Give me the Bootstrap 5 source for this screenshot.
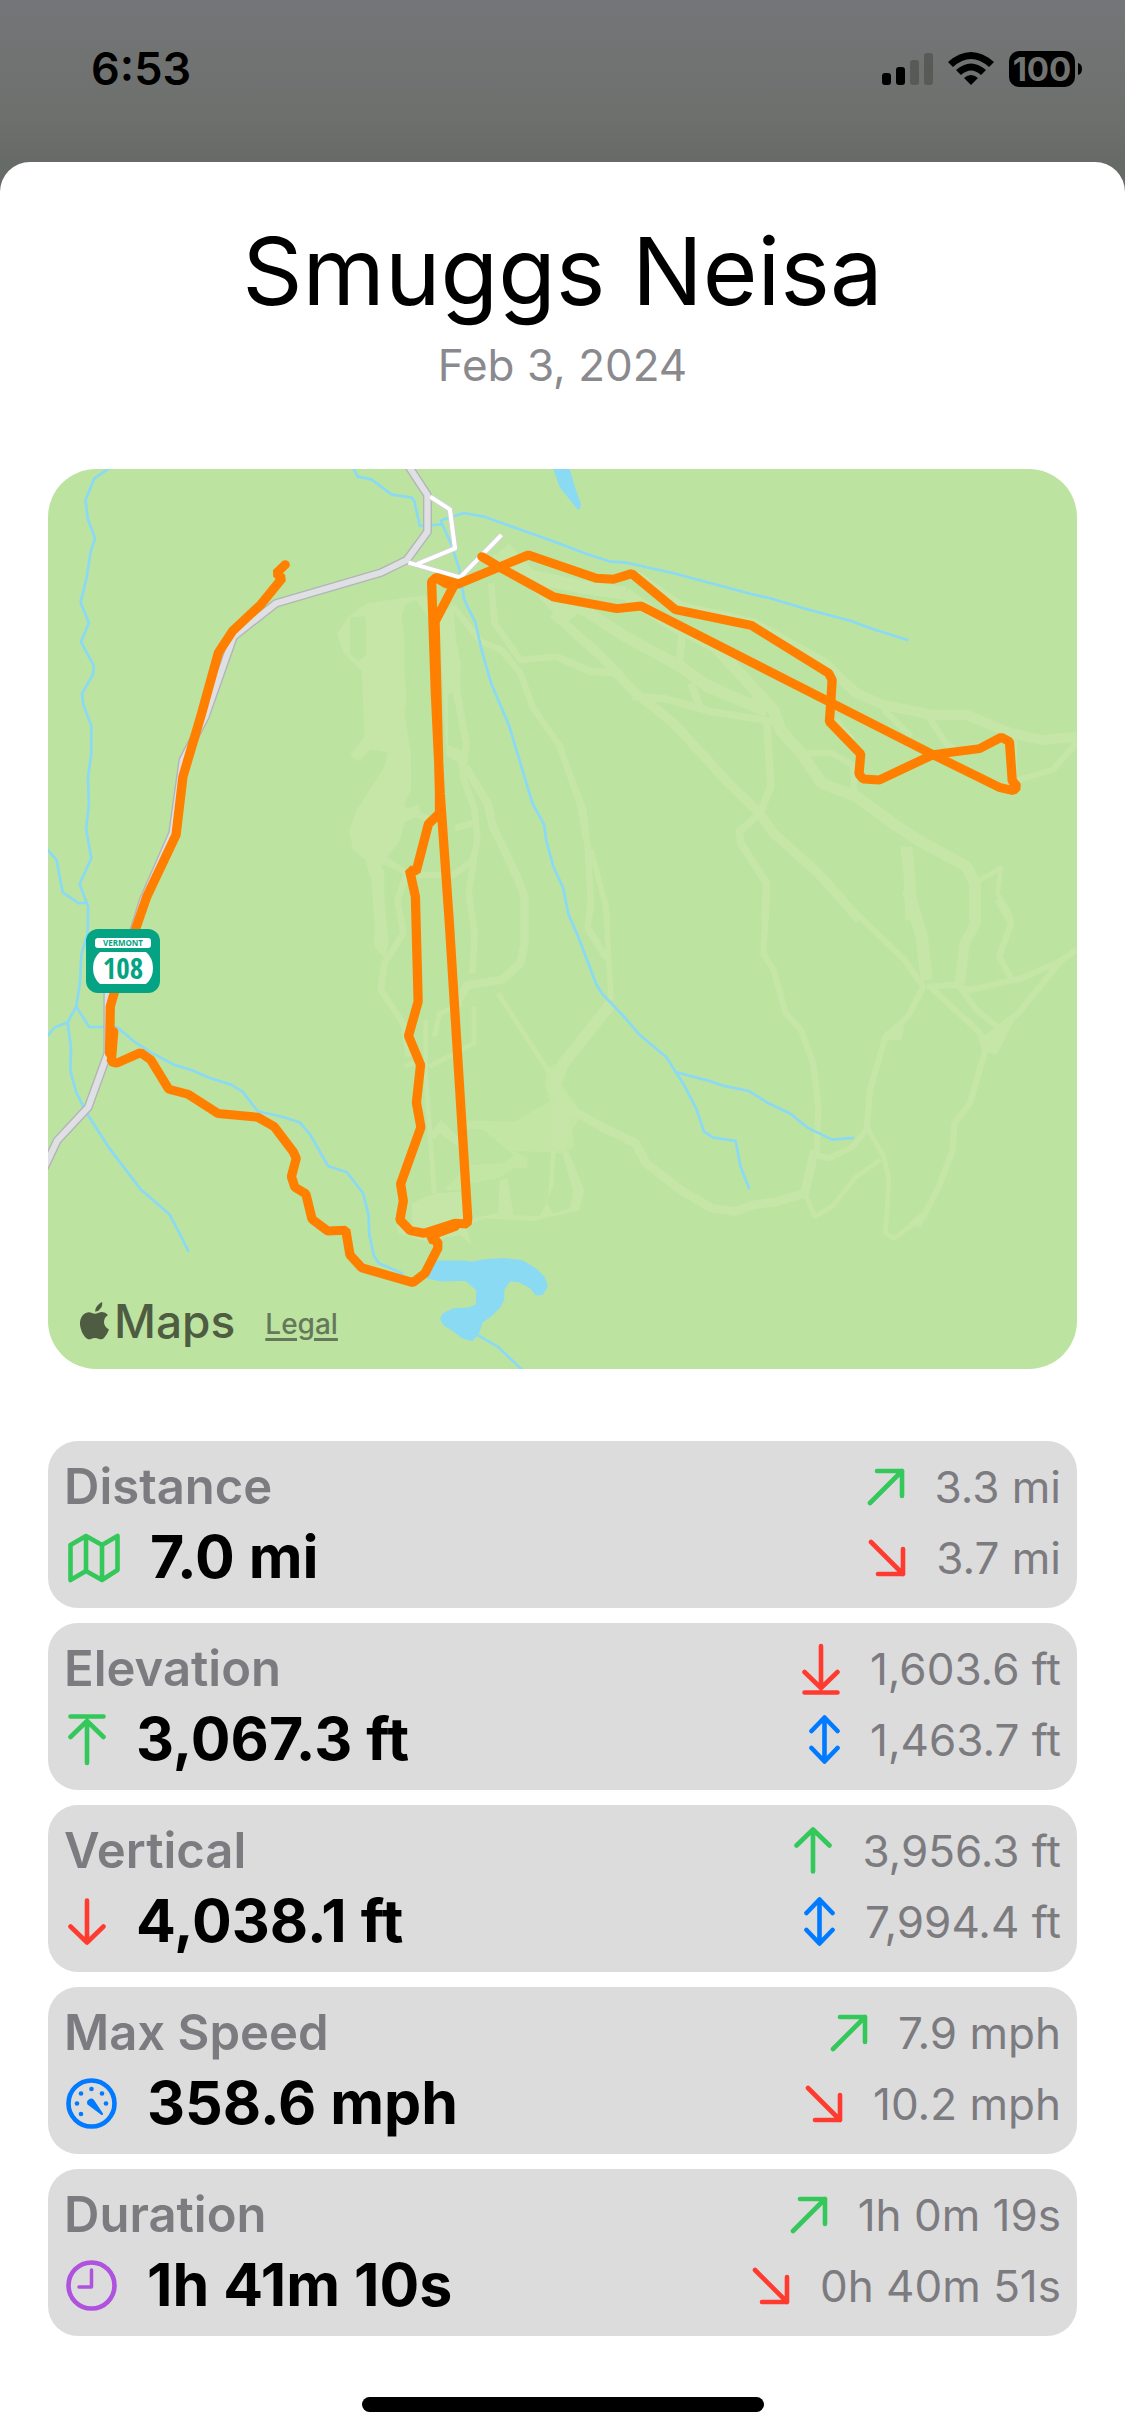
<!DOCTYPE html>
<html lang="en">
<head>
<meta charset="utf-8">
<meta name="viewport" content="width=device-width, initial-scale=1">
<title>Smuggs Neisa</title>
<link href="https://cdn.jsdelivr.net/npm/bootstrap@5.3.0/dist/css/bootstrap.min.css" rel="stylesheet">
<style>
  body { font-family: Inter, "Liberation Sans", sans-serif; color: #000; background: linear-gradient(#747578, #6f716f 100px, #676b67 162px, #676b67 220px, #fff 220px); }
  .status-bar { height: 162px; padding: 0 43px 24px 91px; }
  .clock-time { font-size: 45px; line-height: 54px; font-weight: 600; }
  .sheet { background: #fff; border-radius: 30px 30px 0 0; padding: 57px 48px 24px; }
  .trip-title { font-size: 94px; line-height: 104px; font-weight: 400; }
  .trip-date { font-size: 44px; line-height: 54px; margin-top: 15px; color: #8a8a8e; }
  .trip-map { margin-top: 77px; border-radius: 48px; background: #bde3a1; }
  .map-brand { left: 32px; bottom: 24px; gap: 30px; color: #4e5c42; }
  .maps-word { font-size: 46px; line-height: 48px; font-weight: 500; }
  .legal-link { font-size: 28px; line-height: 36px; font-weight: 500; color: #66785a; text-decoration: underline; text-decoration-thickness: 3px; text-underline-offset: 4px; margin-top: 6px; }
  .stats { margin-top: 72px; gap: 15px; }
  .stat-tile { background: #dcdcdd; border-radius: 30px; padding: 10px 16px 15px; }
  .stat-line { height: 71px; gap: 30px; }
  .stat-name { font-size: 49px; font-weight: 600; color: #7c7b80; }
  .stat-value { font-size: 59px; font-weight: 700; }
  .stat-side { font-size: 44px; color: #7c7b80; }
  .ico { fill: none; stroke: currentColor; stroke-width: 4.6; stroke-linecap: round; stroke-linejoin: round; flex: none; }
  .lead-ico { margin-left: 4px; }
  .round-ico { margin-left: 2px; }
  .c-green { color: #34c759; } .c-red { color: #ff3b30; } .c-blue { color: #007aff; } .c-purple { color: #af52de; }
  .home-bar { width: 402px; height: 15px; border-radius: 8px; background: #000; margin: 61px auto 0; }
</style>
</head>
<body>
<svg class="d-none" aria-hidden="true">
  <symbol id="ne" viewBox="0 0 38 38"><path d="M3 35 35 3M10 3H35V28"/></symbol>
  <symbol id="se" viewBox="0 0 38 38"><path d="M3 3 35 35M10 35H35V10"/></symbol>
  <symbol id="up" viewBox="0 0 38 47"><path d="M19 44.500V2.500M2.500 18.500 19 2.500 35.500 18.500"/></symbol>
  <symbol id="down" viewBox="0 0 38 47"><path d="M19 2.500V44.500M2.500 28.500 19 44.500 35.500 28.500"/></symbol>
  <symbol id="upline" viewBox="0 0 38 52"><path d="M2.500 2.500H35.500M19 49V7M2.500 23 19 7 35.500 23"/></symbol>
  <symbol id="downline" viewBox="0 0 38 52"><path d="M2.500 49.500H35.500M19 3V45M2.500 29 19 45 35.500 29"/></symbol>
  <symbol id="updown" viewBox="0 0 31 49"><path d="M15.500 3V46M2.500 16 15.500 2.500 28.500 16M2.500 33 15.500 46.500 28.500 33"/></symbol>
</svg>

<header class="status-bar d-flex align-items-center justify-content-between">
  <span class="clock-time">6:53</span>
  <svg width="200" height="38" viewBox="0 0 200 38" aria-hidden="true">
    <rect x="0" y="23" width="9" height="12" rx="3"/><rect x="14" y="17" width="9" height="18" rx="3"/>
    <g fill="#585a58"><rect x="28" y="10" width="9" height="25" rx="3"/><rect x="42" y="3" width="9" height="32" rx="3"/></g>
    <path d="M66 12Q89-8 112 12L107 17Q89 1 71 17Z"/>
    <path d="M74 20Q89 7 104 20L99 25Q89 16 79 25Z"/>
    <path d="M82 28Q89 22 96 28L89 35Z"/>
    <rect x="127" y="1" width="66" height="36" rx="10"/><path d="M196 13q4 1 4 6t-4 6z"/>
    <text x="160" y="31" text-anchor="middle" font-size="33" font-weight="700" fill="#717371">100</text>
  </svg>
</header>

<main class="sheet">
  <h1 class="trip-title text-center mb-0">Smuggs Neisa</h1>
  <p class="trip-date text-center mb-0">Feb 3, 2024</p>

  <section class="trip-map position-relative overflow-hidden" aria-label="Route map">
    <svg class="d-block w-100 h-auto" viewBox="0 0 1029 900" aria-hidden="true">
      <g transform="translate(-8 -9) scale(.3444 .3333)" fill="none" stroke-linejoin="round">
        <!-- ski runs, west side -->
        <g fill="#c5e6a6">
          <path fill-rule="evenodd" d="M950 430 1120 405 1150 470 1135 480 1090 420 1060 435 1050 470 1058 530V640L1065 720 1058 760 1077 880V990L1058 1030 1065 1045 1100 1033 1103 1055 1160 1080 1125 1085 1090 1072 1060 1085 1045 1140 1008 1192 1070 1230 1060 1245 1005 1215 990 1215 1000 1240V1320L1012 1440 1004 1500 970 1460 972 1400 962 1260 945 1200 908 1170 898 1110 920 1050 1000 920 1010 877 960 868 925 904 900 885 942 830 935 635 880 575 862 522 895 470ZM900 473 945 468 948 585 925 604 900 580Z"/>
          <path fill-rule="evenodd" d="M1160 470 1200 430 1208 540 1222 610 1220 690 1248 850 1240 910 1235 955 1222 970 1215 910 1180 885ZM1185 705 1198 695 1228 850 1225 872 1185 855Z"/>
        </g>
        <g stroke="#c5e6a6" stroke-width="19">
          <path d="M1200 440 1280 545 1340 570 1395 640 1430 740 1510 860 1570 1040 1590 1160 1600 1330 1590 1400 1640 1490"/>
          <path d="M1310 370 1320 490 1395 600 1500 590 1590 630 1650 640"/>
          <path stroke-width="24" d="M1235 920 1300 1030 1315 1100 1385 1250 1407 1310V1450L1395 1510 1340 1560 1240 1575 1210 1630"/>
          <path d="M1228 950 1262 1050 1270 1140 1258 1200 1200 1245 1100 1245M1205 1105 1258 1090"/>
          <path d="M1260 1200 1245 1300 1262 1420 1255 1540"/>
          <path d="M1065 1240 1038 1320 1055 1420 1000 1510 990 1590 1060 1700 1070 1790"/>
          <path stroke-width="14" d="M1330 1600 1480 1840M1225 1630 1160 1660 1145 1730M1260 1640 1260 1750 1130 1820M1120 1680V1840L1130 1990 1145 2200M1060 1820 1110 1800"/>
        </g>
        <g stroke="#c5e6a6">
          <path stroke-width="44" d="M1345 265 1440 370 1540 480"/>
        </g>
        <!-- lower lift area -->
        <g transform="translate(0 1320)" fill="#c5e6a6">
          <path d="M1225 662 1380 665 1480 605 1465 550 1475 500 1540 480 1515 555 1560 620 1565 660 1545 690 1550 740 1520 760 1370 752 1415 775V805L1380 803 1330 835 1250 850 1215 870 1175 870 1220 820 1250 795 1345 790 1375 765 1285 688 1225 685Z" fill-opacity=".85"/>
          <path d="M1490 610 1525 600 1545 690 1520 755 1485 740Z"/>
          <path d="M1080 910 1145 880 1220 875 1235 960 1252 1035 1220 1005 1120 1025 1040 1000 1035 970 1080 970Z"/>
          <path d="M1130 700 1165 660 1225 720 1225 750 1160 700 1145 720Z"/>
          <path d="M1335 840 1357 835 1375 945H1365L1450 948 1475 900 1485 750H1497L1490 860 1470 905 1490 940 1540 925 1548 870 1515 755H1535L1580 870 1565 932 1430 963 1290 955 1255 970 1250 955 1330 940Z"/>
        </g>
        <!-- ski runs, north-east quarter -->
        <g transform="translate(1510 0)" stroke="#c5e6a6" stroke-width="22">
          <path stroke-width="40" d="M-200 300-80 350 60 380 190 400"/>
          <path stroke-width="34" d="M-30 430 70 450 190 530 350 620 430 680 600 755"/>
          <path stroke-width="34" d="M190 400 300 480 450 560 620 750 640 810 700 880 760 970 860 1010 980 1100 1040 1140 1180 1220 1205 1270V1380"/>
          <path stroke-width="28" d="M-20 460 120 590 210 690 330 790 490 970 580 1060 620 1120 750 1240 870 1380"/>
          <path d="M0 595 90 635 180 640M210 710 300 715 440 755 620 785M600 780 612 980 580 1060 520 1115 525 1150 600 1270 595 1380"/>
          <path d="M230 440 355 520 345 620M380 670 405 740M430 670 560 730 580 690"/>
          <path stroke-width="30" d="M220 345 350 440 560 490 770 610 860 700 940 735 1080 765 1180 765 1310 820 1400 840 1500 830"/>
          <path stroke-width="18" d="M1500 850 1430 930 1330 960M940 750 1020 830M1070 770 1120 850 1150 870 1250 850M700 880 790 880 850 915 855 1000M800 780 850 840"/>
          <path stroke-width="34" d="M1005 1160 1015 1250 1020 1380"/>
          <path stroke-width="14" d="M1210 1265 1280 1225 1270 1300 1300 1350 1310 1380M1320 840V960"/>
          <path stroke-width="16" d="M-10 840 70 1050 80 1160 90 1330 80 1380M90 1170 130 1330 140 1380"/>
        </g>
        <!-- ski runs, south-east quarter -->
        <g transform="translate(1510 1320)" stroke="#c5e6a6" stroke-width="18">
          <path stroke-width="16" d="M88 0 80 90 140 180M132 0 140 150 148 300"/>
          <path stroke-width="34" d="M148 310 80 400 10 490-20 560 20 630"/>
          <path stroke-width="26" d="M0 610 120 680 220 730 250 790 350 870 440 925 510 935 560 915 630 905 710 880 740 750"/>
          <path stroke-width="18" d="M745 760 750 620 735 490 700 390 655 340 620 210 590 160 600 0"/>
          <path d="M740 765 780 775 850 740 890 690 900 570 945 410 1010 350 1055 260 1000 180 900 80 810-10"/>
          <path stroke-width="36" d="M1010-30 1050 110 1065 240"/>
          <path stroke-width="30" d="M1207-30V70L1175 130 1160 250"/>
          <path d="M1065 260 1150 255 1190 270 1340 235 1450 185 1500 150M1270 0 1310 70 1275 170 1310 235"/>
          <path d="M1080 265 1220 400 1235 450 1190 610 1145 670 1140 750 1100 860 1050 960M1160 260 1210 330 1280 390"/>
          <path d="M1460 175 1330 340 1230 420"/>
          <path stroke-width="14" d="M890 680 940 770 955 840 945 1000 970 1015 1050 955M930 780 860 830 790 920 740 950 710 880"/>
          <path fill="#c5e6a6" stroke="none" d="M1240 415 1320 360 1268 463 1235 455ZM945 395 1000 375 992 420 945 420ZM1010 970 1060 930 1050 983Z"/>
        </g>

        <!-- streams and ponds -->
        <g stroke="#8bdaf4" stroke-width="8">
          <path d="M200 25 158 55 132 120 139 178 160 235 147 275 136 350 118 428 142 488 119 546 156 617 154 643 122 700 126 735 149 797V880L139 955 142 1030 134 1108 149 1194 115 1273 140 1340 138 1420 120 1485 116 1570 105 1640 80 1688 90 1765 88 1832 105 1896 130 1950 200 2063 292 2188 375 2262 405 2320 432 2376"/>
          <path d="M20 1168 48 1200 66 1297 113 1330 137 1328M20 1730 43 1702 80 1688M105 1640 143 1701 224 1702 270 1742 318 1775 388 1814 440 1830 495 1855 555 1874 588 1895 632 1954 706 1971 755 1988 785 2025 836 2118 891 2137 938 2200 954 2265 956 2325 970 2388 984 2410 1055 2442"/>
          <path d="M910 25 923 50 962 58 1022 104 1080 113 1087 124 1103 198 1168 193 1195 255 1218 330 1232 420 1264 487 1283 573 1310 670 1362 797 1395 910 1430 1030 1464 1095 1470 1142 1490 1218 1519 1284 1534 1362 1562 1428 1615 1573 1635 1605 1700 1675 1740 1724 1820 1793 1845 1835 1870 1875 1905 1945 1928 2015 1955 2033 2020 2043 2034 2120 2060 2188"/>
          <path d="M1845 1836 1940 1862 1982 1877 2058 1893 2115 1930 2177 1960 2228 2003 2300 2039 2363 2034"/>
          <path d="M1165 197V181L1230 159 1290 170 1400 211 1488 243 1590 283 1652 304 1697 307 1840 340 2065 402 2120 415 2225 447 2355 483 2420 508 2521 541"/>
          <path d="M1270 2625 1330 2661 1400 2730"/>
        </g>
        <g fill="#8bdaf4">
          <path d="M1488 20 1508 80 1560 148H1568L1571 133 1556 90 1536 20Z"/>
          <path d="M1120 2455 1150 2402H1230L1255 2405 1290 2398 1345 2394 1400 2400 1440 2425 1465 2450 1475 2478 1460 2505 1440 2507 1422 2484 1390 2467 1365 2465 1348 2490V2520L1335 2545 1310 2570 1285 2588 1275 2620 1255 2644 1225 2635 1200 2615 1172 2597 1161 2577 1170 2560 1200 2545 1245 2543 1266 2533V2490L1235 2463 1165 2465Z"/>
        </g>

        <!-- highway and side roads -->
        <path stroke="#b2b4b8" stroke-width="26" d="M1068 15 1125 105V215L1065 300 990 338 685 430 562 530 480 770 415 900 385 1120 300 1320 270 1420 197 1600V1780L140 1942 50 2042 5 2140"/>
        <path stroke="#dfe0e4" stroke-width="18" d="M1068 15 1125 105V215L1065 300 990 338 685 430 562 530 480 770 415 900 385 1120 300 1320 270 1420 197 1600V1780L140 1942 50 2042 5 2140"/>
        <path stroke="#cfd2cf" stroke-width="18" d="M1133 110 1190 148 1205 265 1095 312M1070 308 1220 352 1340 225"/>
        <path stroke="#fff" stroke-width="12" d="M1133 110 1190 148 1205 265 1095 312M1070 308 1220 352 1340 225"/>

        <!-- recorded track -->
        <g stroke="#ff8000" stroke-width="27" stroke-linecap="round" stroke-linejoin="bevel">
          <path d="M712 314 686 340 703 355 640 435 560 512 518 578 468 765 415 950 395 1125 310 1310 280 1400 215 1600 204 1640 202 1780 M214 1715 207 1805 222 1810 292 1778 322 1800 374 1888 430 1903 517 1961 633 1972 680 2000 735 2075 744 2095 730 2150 740 2182 772 2202 790 2278 835 2313 888 2311 900 2385 935 2424 1083 2468 1118 2440 1155 2365V2345L1135 2338 1140 2325 1205 2300"/>
          <path d="M1283 290 1335 322 1492 411 1675 446 1745 438 2593 884 2785 982 2826 992 2837 980 2823 962 2815 845 2791 832 2728 866 2593 884 2437 960 2390 957 2378 942 2383 882 2292 785 2296 730 2300 660 2290 640 2065 496 1845 449 1718 341 1665 358 1615 355 1418 285 1215 372 1150 352 1137 365 1148 700 1162 1000 1188 1380 1242 2275 1240 2292 1205 2290 1115 2320 1075 2312 1045 2280 1055 2223 1047 2172 1106 2002 1093 1928 1105 1815 1070 1728 1098 1625 1090 1310 1073 1230 1092 1235 1128 1092 1160 1060V1000L1147 485 1200 380"/>
          <path d="M1150 354 1180 372 1215 372"/>
        </g>
      </g>
      <!-- state route shield -->
      <g transform="translate(38 460)">
        <rect width="74" height="64" rx="12" fill="#03a383"/>
        <rect x="9" y="9" width="56" height="10" rx="3" fill="#fff"/>
        <path d="M14 23H60Q67 29 67 39T60 55H14Q7 49 7 39T14 23Z" fill="#fff"/>
        <text x="37" y="17" text-anchor="middle" font-family="Open Sans, sans-serif" font-size="8" font-weight="700" fill="#03a383">VERMONT</text>
        <text x="37" y="50" text-anchor="middle" font-family="Open Sans Condensed, Open Sans, sans-serif" font-size="29" font-weight="700" fill="#03a383">108</text>
      </g>
    </svg>
    <div class="map-brand position-absolute d-flex align-items-center">
      <span class="d-flex align-items-center gap-1">
        <svg width="30" height="38" viewBox="0 0 30 38" fill="currentColor" aria-hidden="true"><path d="M22 0Q23 4 20 7 18 10 15 9.500 15 6 17.500 3.500 19.500 1 22 0ZM28 13Q24 15.500 24 20 24 25 29 27.500 27 33 24 36 22 38 19 37 15 35 11 37 8 38.500 5 35 1 30 0 23-.500 16 4 12 8 9 12 11 15 12.500 18 11 24 8.500 28 13Z"/></svg>
        <span class="maps-word">Maps</span>
      </span>
      <a class="legal-link" href="#legal">Legal</a>
    </div>
  </section>

  <section class="stats d-flex flex-column" aria-label="Statistics">
    <article class="stat-tile d-flex justify-content-between">
      <div>
        <div class="stat-line d-flex align-items-center stat-name">Distance</div>
        <div class="stat-line d-flex align-items-center"><svg class="ico lead-ico c-green" width="52" height="50" viewBox="0 0 52 50"><path d="M2.500 12 18 3 34 12 49.500 3V37L34 47 18 38 2.500 47ZM18 3V38M34 12V47"/></svg><span class="stat-value">7.0 mi</span></div>
      </div>
      <div>
        <div class="stat-line d-flex align-items-center justify-content-end"><svg class="ico c-green" width="38" height="38"><use href="#ne"/></svg><span class="stat-side">3.3 mi</span></div>
        <div class="stat-line d-flex align-items-center justify-content-end"><svg class="ico c-red" width="38" height="38"><use href="#se"/></svg><span class="stat-side">3.7 mi</span></div>
      </div>
    </article>
    <article class="stat-tile d-flex justify-content-between">
      <div>
        <div class="stat-line d-flex align-items-center stat-name">Elevation</div>
        <div class="stat-line d-flex align-items-center"><svg class="ico lead-ico c-green" width="38" height="52"><use href="#upline"/></svg><span class="stat-value">3,067.3 ft</span></div>
      </div>
      <div>
        <div class="stat-line d-flex align-items-center justify-content-end"><svg class="ico c-red" width="38" height="52"><use href="#downline"/></svg><span class="stat-side">1,603.6 ft</span></div>
        <div class="stat-line d-flex align-items-center justify-content-end"><svg class="ico c-blue" width="31" height="49"><use href="#updown"/></svg><span class="stat-side">1,463.7 ft</span></div>
      </div>
    </article>
    <article class="stat-tile d-flex justify-content-between">
      <div>
        <div class="stat-line d-flex align-items-center stat-name">Vertical</div>
        <div class="stat-line d-flex align-items-center"><svg class="ico lead-ico c-red" width="38" height="47"><use href="#down"/></svg><span class="stat-value">4,038.1 ft</span></div>
      </div>
      <div>
        <div class="stat-line d-flex align-items-center justify-content-end"><svg class="ico c-green" width="38" height="47"><use href="#up"/></svg><span class="stat-side">3,956.3 ft</span></div>
        <div class="stat-line d-flex align-items-center justify-content-end"><svg class="ico c-blue" width="31" height="49"><use href="#updown"/></svg><span class="stat-side">7,994.4 ft</span></div>
      </div>
    </article>
    <article class="stat-tile d-flex justify-content-between">
      <div>
        <div class="stat-line d-flex align-items-center stat-name">Max Speed</div>
        <div class="stat-line d-flex align-items-center"><svg class="ico round-ico c-blue" width="51" height="51" viewBox="0 0 51 51"><circle cx="25.500" cy="25.500" r="23"/><g fill="currentColor" stroke="none"><circle cx="25.500" cy="11" r="2.300"/><circle cx="15" cy="15.500" r="2.300"/><circle cx="36" cy="15.500" r="2.300"/><circle cx="11" cy="25.500" r="2.300"/><circle cx="40" cy="25.500" r="2.300"/><circle cx="15" cy="36" r="2.300"/><path d="M21.500 26.500A4 4 0 0 1 28 22L37 35.500Q37.500 37.500 35.500 37Z"/></g></svg><span class="stat-value">358.6 mph</span></div>
      </div>
      <div>
        <div class="stat-line d-flex align-items-center justify-content-end"><svg class="ico c-green" width="38" height="38"><use href="#ne"/></svg><span class="stat-side">7.9 mph</span></div>
        <div class="stat-line d-flex align-items-center justify-content-end"><svg class="ico c-red" width="38" height="38"><use href="#se"/></svg><span class="stat-side">10.2 mph</span></div>
      </div>
    </article>
    <article class="stat-tile d-flex justify-content-between">
      <div>
        <div class="stat-line d-flex align-items-center stat-name">Duration</div>
        <div class="stat-line d-flex align-items-center"><svg class="ico round-ico c-purple" width="51" height="51" viewBox="0 0 51 51"><circle cx="25.500" cy="25.500" r="23"/><path stroke-width="3.500" d="M25.500 10V27H13"/></svg><span class="stat-value">1h 41m 10s</span></div>
      </div>
      <div>
        <div class="stat-line d-flex align-items-center justify-content-end"><svg class="ico c-green" width="38" height="38"><use href="#ne"/></svg><span class="stat-side">1h 0m 19s</span></div>
        <div class="stat-line d-flex align-items-center justify-content-end"><svg class="ico c-red" width="38" height="38"><use href="#se"/></svg><span class="stat-side">0h 40m 51s</span></div>
      </div>
    </article>
  </section>
  <div class="home-bar"></div>
</main>
<script src="https://cdn.jsdelivr.net/npm/bootstrap@5.3.0/dist/js/bootstrap.bundle.min.js"></script>
</body>
</html>
